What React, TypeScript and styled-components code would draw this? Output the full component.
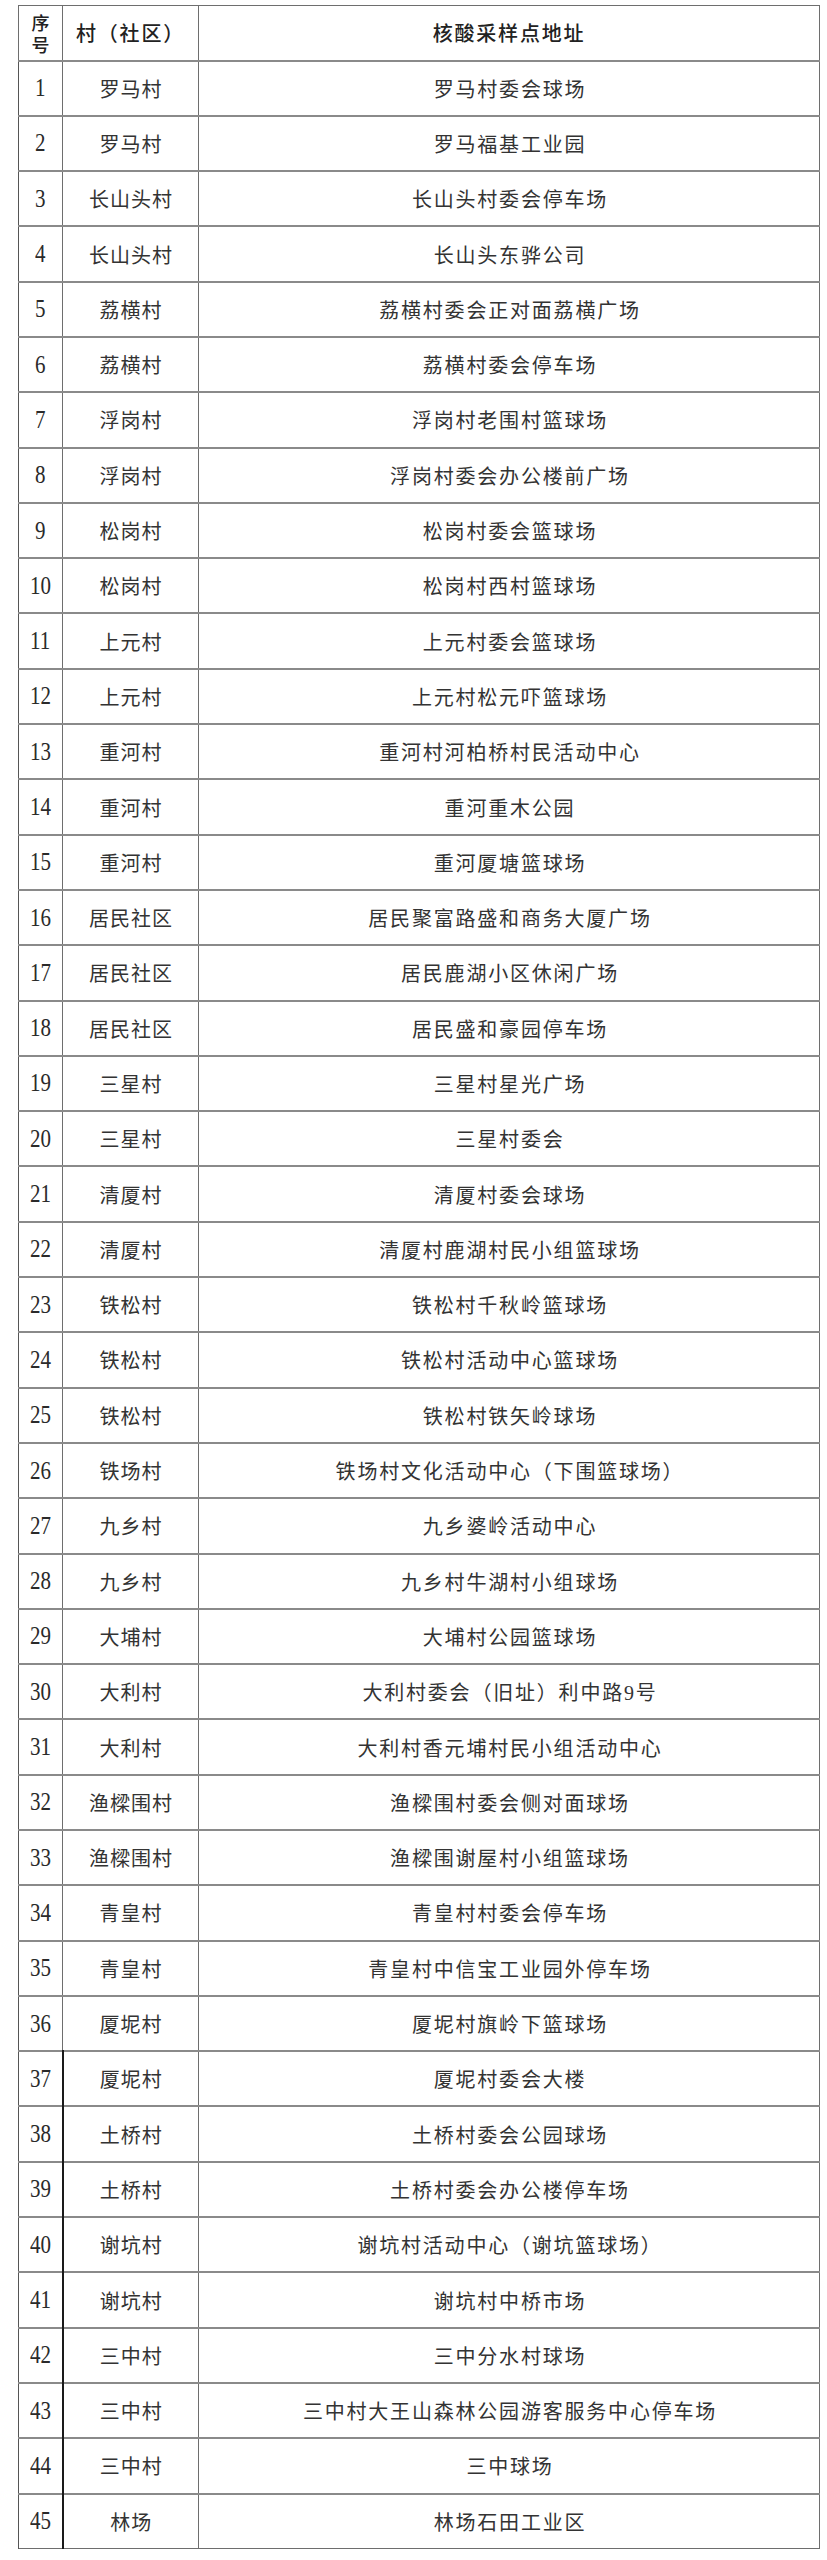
import styled, { createGlobalStyle } from "styled-components";

const GlobalStyle = createGlobalStyle`
    html, body {
        margin: 0;
        padding: 0;
        background: #ffffff;
    }
    body {
        font-family: 'Liberation Serif', 'Noto Sans CJK SC', serif;
        color: #2b2b2b;
    }
`

const rows: [string, string][] = [
    ['罗马村', '罗马村委会球场'],
    ['罗马村', '罗马福基工业园'],
    ['长山头村', '长山头村委会停车场'],
    ['长山头村', '长山头东骅公司'],
    ['荔横村', '荔横村委会正对面荔横广场'],
    ['荔横村', '荔横村委会停车场'],
    ['浮岗村', '浮岗村老围村篮球场'],
    ['浮岗村', '浮岗村委会办公楼前广场'],
    ['松岗村', '松岗村委会篮球场'],
    ['松岗村', '松岗村西村篮球场'],
    ['上元村', '上元村委会篮球场'],
    ['上元村', '上元村松元吓篮球场'],
    ['重河村', '重河村河柏桥村民活动中心'],
    ['重河村', '重河重木公园'],
    ['重河村', '重河厦塘篮球场'],
    ['居民社区', '居民聚富路盛和商务大厦广场'],
    ['居民社区', '居民鹿湖小区休闲广场'],
    ['居民社区', '居民盛和豪园停车场'],
    ['三星村', '三星村星光广场'],
    ['三星村', '三星村委会'],
    ['清厦村', '清厦村委会球场'],
    ['清厦村', '清厦村鹿湖村民小组篮球场'],
    ['铁松村', '铁松村千秋岭篮球场'],
    ['铁松村', '铁松村活动中心篮球场'],
    ['铁松村', '铁松村铁矢岭球场'],
    ['铁场村', '铁场村文化活动中心（下围篮球场）'],
    ['九乡村', '九乡婆岭活动中心'],
    ['九乡村', '九乡村牛湖村小组球场'],
    ['大埔村', '大埔村公园篮球场'],
    ['大利村', '大利村委会（旧址）利中路9号'],
    ['大利村', '大利村香元埔村民小组活动中心'],
    ['渔樑围村', '渔樑围村委会侧对面球场'],
    ['渔樑围村', '渔樑围谢屋村小组篮球场'],
    ['青皇村', '青皇村村委会停车场'],
    ['青皇村', '青皇村中信宝工业园外停车场'],
    ['厦坭村', '厦坭村旗岭下篮球场'],
    ['厦坭村', '厦坭村委会大楼'],
    ['土桥村', '土桥村委会公园球场'],
    ['土桥村', '土桥村委会办公楼停车场'],
    ['谢坑村', '谢坑村活动中心（谢坑篮球场）'],
    ['谢坑村', '谢坑村中桥市场'],
    ['三中村', '三中分水村球场'],
    ['三中村', '三中村大王山森林公园游客服务中心停车场'],
    ['三中村', '三中球场'],
    ['林场', '林场石田工业区'],
]

function App() {
    return (
        <>
            <GlobalStyle />
            <SiteTable>
                <colgroup>
                    <col style={{ width: 44 }} />
                    <col style={{ width: 136 }} />
                    <col style={{ width: 621 }} />
                </colgroup>
                <thead>
                    <HeadRow>
                        <HeadCell>
                            <StackedHead>序</StackedHead>
                            <StackedHead>号</StackedHead>
                        </HeadCell>
                        <HeadCell>村（社区）</HeadCell>
                        <HeadCell>核酸采样点地址</HeadCell>
                    </HeadRow>
                </thead>
                <tbody>
                    {rows.map((elem, i) => {
                        const strong = i >= 36
                        return (
                            <BodyRow key={i}>
                                <NumCell $strong={strong}>
                                    <NumText>{i + 1}</NumText>
                                </NumCell>
                                <VillageCell>{elem[0]}</VillageCell>
                                <AddressCell>{elem[1]}</AddressCell>
                            </BodyRow>
                        )
                    })}
                </tbody>
            </SiteTable>
        </>
    )
}

const SiteTable = styled.table`
    width: 801px;
    margin: 5px 0 0 18px;
    border-collapse: collapse;
    table-layout: fixed;
    border: 1px solid #6e6e6e;
`
const HeadRow = styled.tr`
    height: 55px;
`
const BodyRow = styled.tr`
    height: 55.3px;
`
const HeadCell = styled.th`
    padding: 0;
    border: 1px solid #6e6e6e;
    border-bottom: 2px solid #8a8a8a;
    font-family: 'Noto Sans CJK SC', sans-serif;
    font-weight: 500;
    font-size: 20px;
    letter-spacing: 1.8px;
    color: #222;
    text-align: center;
    vertical-align: middle;
`
const StackedHead = styled.div`
    font-size: 18px;
    line-height: 22px;
    letter-spacing: 0;
`
interface INumCell {
    $strong: boolean;
}
const NumCell = styled.td<INumCell>`
    padding: 0;
    border-top: 2px solid #8a8a8a;
    border-left: 1px solid #555;
    border-right: ${props => props.$strong ? '2px solid #1a1a1a' : '1px solid #6e6e6e'};
    text-align: center;
    vertical-align: middle;
    white-space: nowrap;
`
const NumText = styled.span`
    display: inline-block;
    font-family: 'Liberation Serif', serif;
    font-size: 25px;
    color: #2a2a2a;
    transform: scaleX(0.84);
`
const VillageCell = styled.td`
    padding: 0 0 0 1px;
    border-top: 2px solid #8a8a8a;
    border-right: 1px solid #6e6e6e;
    font-family: 'Noto Sans CJK SC', sans-serif;
    font-weight: 400;
    font-size: 20px;
    letter-spacing: 1px;
    color: #333;
    text-align: center;
    vertical-align: middle;
    white-space: nowrap;
`
const AddressCell = styled.td`
    padding: 0 0 0 2px;
    border-top: 2px solid #8a8a8a;
    border-right: 1px solid #6e6e6e;
    font-family: 'Liberation Serif', 'Noto Sans CJK SC', serif;
    font-weight: 400;
    font-size: 20px;
    letter-spacing: 1.8px;
    color: #333;
    text-align: center;
    vertical-align: middle;
    white-space: nowrap;
`

export default App;
